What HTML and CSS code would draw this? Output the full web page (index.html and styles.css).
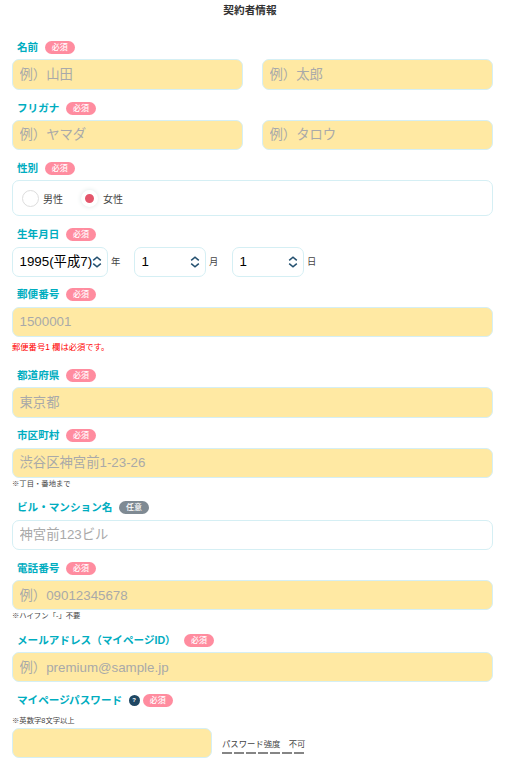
FILE: index.html
```
<!DOCTYPE html>
<html lang="ja">
<head>
<meta charset="utf-8">
<title>契約者情報</title>
<link rel="stylesheet" href="styles.css">
</head>
<body>
<form class="form">
  <h1 class="title">契約者情報</h1>

  <section class="group name">
    <div class="label">名前<span class="badge">必須</span></div>
    <div class="pair">
      <input class="input tall" placeholder="例）山田">
      <input class="input tall" placeholder="例）太郎">
    </div>
  </section>

  <section class="group kana">
    <div class="label">フリガナ<span class="badge">必須</span></div>
    <div class="pair">
      <input class="input" placeholder="例）ヤマダ">
      <input class="input" placeholder="例）タロウ">
    </div>
  </section>

  <section class="group gender">
    <div class="label">性別<span class="badge">必須</span></div>
    <div class="radios">
      <label class="option"><span class="radio"></span>男性</label>
      <label class="option"><span class="radio checked"></span>女性</label>
    </div>
  </section>

  <section class="group birth">
    <div class="label raised">生年月日<span class="badge">必須</span></div>
    <div class="dates">
      <div class="picker year">
        <select class="select"><option>1995(平成7)</option></select>
        <svg class="arrows" viewBox="0 0 10 12"><path d="M1.2 4.4 5 1.2l3.8 3.2M1.2 7.6 5 10.8l3.8-3.2"/></svg>
      </div>
      <span class="unit">年</span>
      <div class="picker">
        <select class="select"><option>1</option></select>
        <svg class="arrows" viewBox="0 0 10 12"><path d="M1.2 4.4 5 1.2l3.8 3.2M1.2 7.6 5 10.8l3.8-3.2"/></svg>
      </div>
      <span class="unit">月</span>
      <div class="picker">
        <select class="select"><option>1</option></select>
        <svg class="arrows" viewBox="0 0 10 12"><path d="M1.2 4.4 5 1.2l3.8 3.2M1.2 7.6 5 10.8l3.8-3.2"/></svg>
      </div>
      <span class="unit">日</span>
    </div>
  </section>

  <section class="group zip">
    <div class="label raised">郵便番号<span class="badge">必須</span></div>
    <input class="input" placeholder="1500001">
    <p class="error">郵便番号1 欄は必須です。</p>
  </section>

  <section class="group prefecture">
    <div class="label">都道府県<span class="badge">必須</span></div>
    <input class="input tall" placeholder="東京都">
  </section>

  <section class="group city">
    <div class="label raised">市区町村<span class="badge">必須</span></div>
    <input class="input" placeholder="渋谷区神宮前1-23-26">
    <p class="note">※丁目・番地まで</p>
  </section>

  <section class="group building">
    <div class="label raised">ビル・マンション名<span class="badge optional">任意</span></div>
    <input class="input plain" placeholder="神宮前123ビル">
  </section>

  <section class="group phone">
    <div class="label">電話番号<span class="badge">必須</span></div>
    <input class="input" placeholder="例）09012345678">
    <p class="note">※ハイフン「-」不要</p>
  </section>

  <section class="group email">
    <div class="label">メールアドレス（マイページID）<span class="badge">必須</span></div>
    <input class="input" placeholder="例）premium@sample.jp">
  </section>

  <section class="group password">
    <div class="label">マイページパスワード<span class="help">?</span><span class="badge">必須</span></div>
    <p class="note rule">※英数字8文字以上</p>
    <div class="password-row">
      <input class="input" type="password">
      <div class="strength">
        <div>パスワード強度　不可</div>
        <div class="meter"><i></i><i></i><i></i><i></i><i></i><i></i><i></i></div>
      </div>
    </div>
  </section>
</form>
</body>
</html>
```
FILE: styles.css
```
* { box-sizing: border-box; }

body {
  margin: 0;
  background: #fff;
  color: #444;
  font-family: "Liberation Sans", "Noto Sans CJK JP", sans-serif;
}

.form { width: 481px; margin-left: 12px; }

.title {
  height: 20px;
  margin: 0 5px 15px 0;
  font-size: 10.67px;
  line-height: 20px;
  text-align: center;
  color: #333;
}

.group { margin-bottom: 6px; }
.gender { margin-bottom: 7px; }

.label {
  display: flex;
  align-items: center;
  height: 24px;
  padding-left: 5px;
  font-size: 10.6px;
  font-weight: 700;
  line-height: 24px;
  color: #00adbf;
}
.label.raised { padding-bottom: 2px; }

.badge {
  width: 30px;
  height: 13px;
  margin-left: 6.6px;
  border-radius: 7px;
  background: #ff8c9f;
  color: #fff;
  font-size: 8px;
  font-weight: 500;
  line-height: 13px;
  text-align: center;
}
.badge.optional { background: #7f8a93; }
.email .badge { margin-left: 8.4px; }

.input, .select {
  display: block;
  width: 100%;
  height: 30px;
  margin: 0;
  padding: 0 6.5px 2px;
  border: 1px solid #d5eff4;
  border-radius: 7px;
  outline: 0;
  background: #ffe9a3;
  font: 13.33px "Liberation Sans", "Noto Sans CJK JP", sans-serif;
}
.input.tall { height: 31px; padding-bottom: 1px; }
.input.plain { background: #fff; }
.input::placeholder { color: #a9a9a9; opacity: 1; }
.phone .input, .email .input { padding-bottom: 0; }

.pair {
  display: grid;
  grid-template-columns: 1fr 1fr;
  gap: 19px;
}

.radios {
  display: flex;
  align-items: center;
  height: 36px;
  padding-left: 9px;
  border: 1px solid #d5eff4;
  border-radius: 7px;
}
.option {
  display: flex;
  align-items: center;
  width: 59px;
  font-size: 10px;
}
.radio {
  width: 17px;
  height: 17px;
  margin-right: 4px;
  border: 1px solid #ddd;
  border-radius: 50%;
}
.radio.checked {
  margin-right: 5px;
  border: 4px solid #fff;
  background: #e4566b;
  box-shadow: 0 0 5px #dfe7e6;
}

.dates { display: flex; align-items: center; }
.picker { display: grid; align-items: center; width: 72px; }
.picker.year { width: 96px; }
.select, .arrows { grid-area: 1 / 1; }
.select { appearance: none; background: #fff; color: #000; }
.arrows {
  width: 10px;
  height: 12px;
  margin-right: 6px;
  justify-self: end;
  fill: none;
  stroke: #24506f;
  stroke-width: 1.5;
  pointer-events: none;
}
.unit { width: 23px; margin-left: 3px; font-size: 9.33px; line-height: 14px; }

.error, .note { margin: 0; white-space: nowrap; }
.error { height: 20px; color: #f00; font-size: 8.3px; line-height: 20px; }
.note { height: 12px; font-size: 7.33px; line-height: 12px; }

.help {
  width: 11px;
  height: 11px;
  margin: 0 -3.6px 0 6.6px;
  border-radius: 50%;
  background: #1f4763;
  color: #fff;
  font-size: 6px;
  line-height: 11px;
  text-align: center;
}
.note.rule { height: 16px; line-height: 18px; }
.password-row { display: flex; }
.password-row .input { width: 200px; }
.strength {
  margin: 9px 0 0 10px;
  font-size: 8.33px;
  line-height: 14px;
  white-space: nowrap;
}
.meter { display: flex; gap: 2px; margin-top: 1px; }
.meter i { width: 10px; height: 2px; background: #858585; }
```
